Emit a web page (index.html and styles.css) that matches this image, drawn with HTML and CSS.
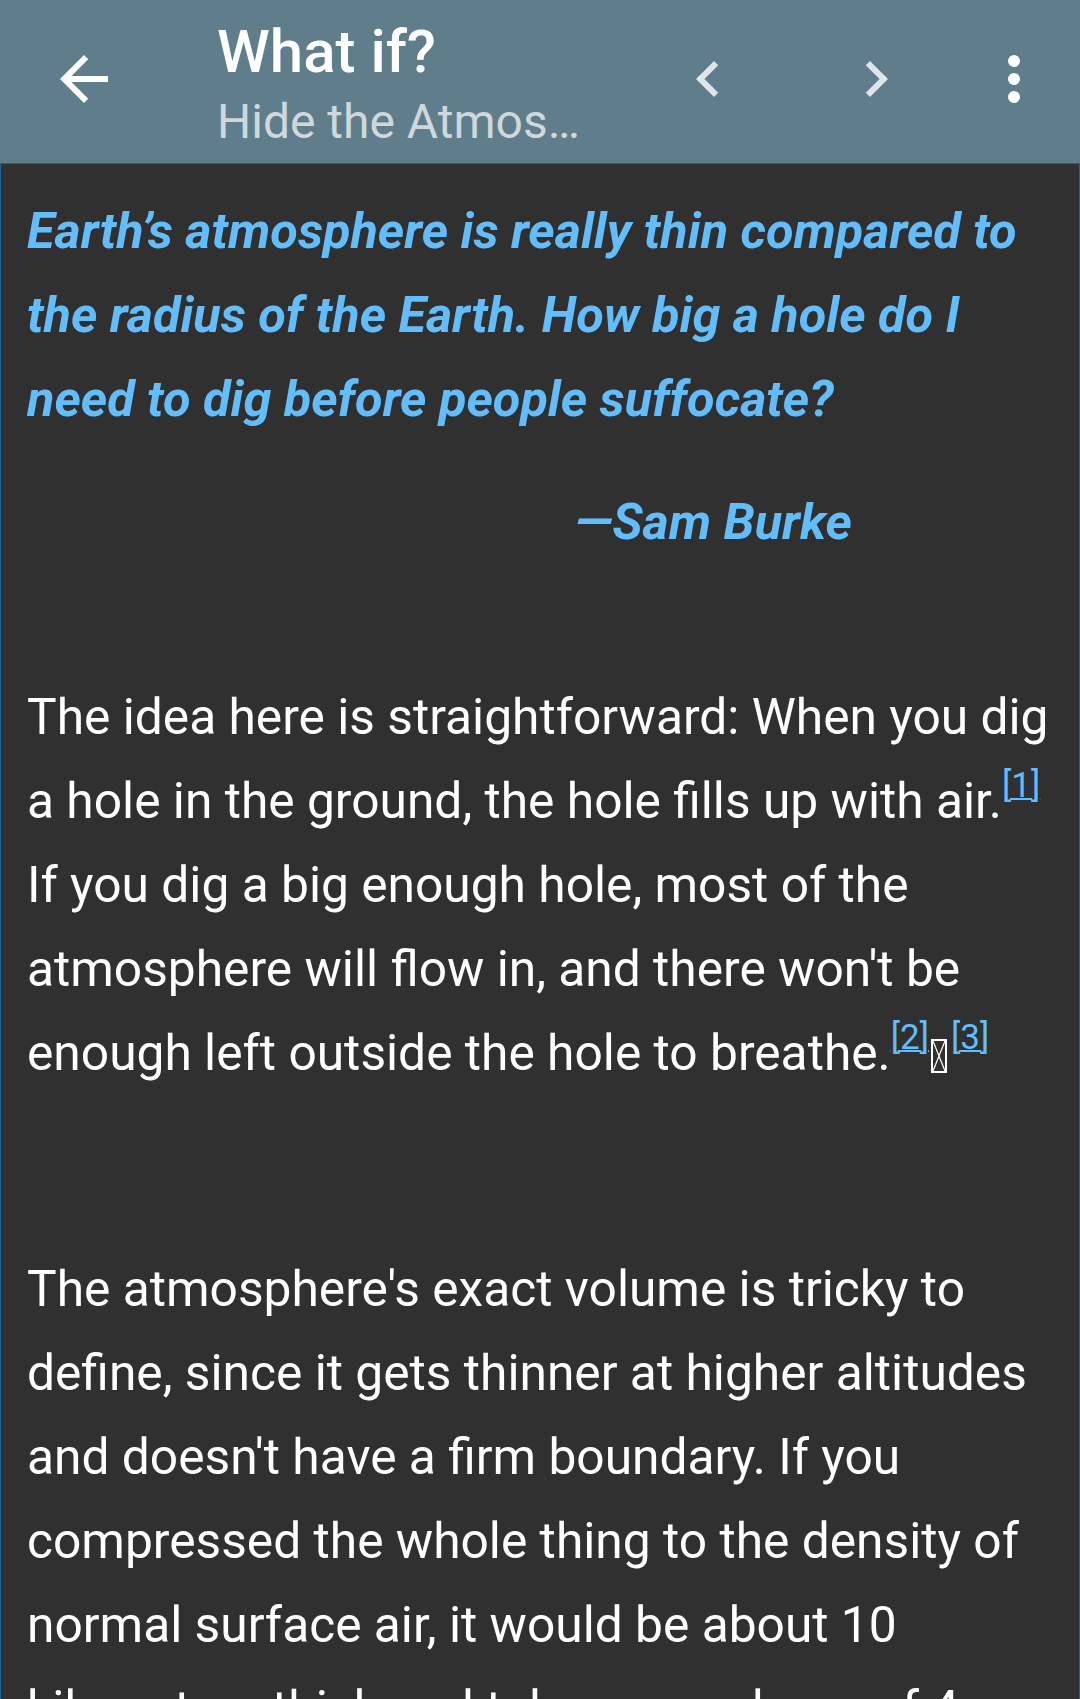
FILE: index.html
```html
<!DOCTYPE html>
<html lang="en">
<head>
<meta charset="utf-8">
<title>What if? - Hide the Atmosphere</title>
<link rel="stylesheet" href="styles.css">
</head>
<body>
<header class="toolbar">
  <button class="icon-btn back" aria-label="Back">
    <svg viewBox="0 0 24 24" width="72" height="72"><path fill="#fff" d="M20 11H7.83l5.59-5.59L12 4l-8 8 8 8 1.41-1.41L7.83 13H20v-2z"/></svg>
  </button>
  <div class="titles">
    <div class="title">What if?</div>
    <div class="subtitle">Hide the Atmos…</div>
  </div>
  <button class="icon-btn prev" aria-label="Previous">
    <svg viewBox="0 0 24 24" width="72" height="72"><path fill="#dfe5e8" d="M15.41 7.41L14 6l-6 6 6 6 1.41-1.41L10.83 12z"/></svg>
  </button>
  <button class="icon-btn next" aria-label="Next">
    <svg viewBox="0 0 24 24" width="72" height="72"><path fill="#dfe5e8" d="M10 6L8.59 7.41 13.17 12l-4.58 4.59L10 18l6-6z"/></svg>
  </button>
  <button class="icon-btn more" aria-label="More options">
    <svg viewBox="0 0 24 24" width="72" height="72"><circle fill="#fff" cx="12" cy="6" r="2"/><circle fill="#fff" cx="12" cy="12" r="2"/><circle fill="#fff" cx="12" cy="18" r="2"/></svg>
  </button>
</header>
<main class="article">
  <blockquote class="question">
    <p class="question-text">Earth’s atmosphere is really thin compared to the radius of the Earth. How big a hole do I need to dig before people suffocate?</p>
    <p class="attribution">—Sam Burke</p>
  </blockquote>
  <p class="para first">The idea here is straightforward: When you dig a hole in the ground, the hole fills up with air.<sup class="ref"><a href="#ref1">[1]</a></sup> If you dig a big enough hole, most of the atmosphere will flow in, and there won't be enough left outside the hole to breathe.<sup class="ref"><a href="#ref2">[2]</a></sup><span class="tofu"><svg viewBox="0 0 16 34" width="16" height="34"><rect x="1" y="1" width="14" height="32" fill="none" stroke="#fff" stroke-width="2"/><path d="M2 2L14 32M14 2L2 32" stroke="#fff" stroke-width="1.2" fill="none"/></svg></span><sup class="ref"><a href="#ref3">[3]</a></sup></p>
  <p class="para second">The atmosphere's exact volume is tricky to define, since it gets thinner at higher altitudes and doesn't have a firm boundary. If you compressed the whole thing to the density of normal surface air, it would be about 10 kilometers thick and take up a volume of 4 billion cubic kilometers.</p>
</main>
</body>
</html>
```

FILE: styles.css
```css
* { box-sizing: border-box; }
html, body {
  margin: 0;
  padding: 0;
  background: #303030;
  font-family: Roboto, "Noto Sans", sans-serif;
}
body { overflow: hidden; height: 1699px; }

.toolbar {
  display: flex;
  align-items: flex-start;
  height: 163px;
  background: #607d8b;
  padding: 0 30px 0 48px;
}
.icon-btn {
  flex: none;
  width: 72px;
  height: 72px;
  margin-top: 43px;
  padding: 0;
  border: 0;
  background: none;
  display: block;
}
.icon-btn svg { display: block; }
.titles {
  flex: 1;
  min-width: 0;
  padding-left: 97px;
  padding-top: 16px;
  color: #fff;
}
.title {
  font-size: 60px;
  font-weight: 500;
  line-height: 72px;
}
.subtitle {
  font-size: 48px;
  font-weight: 400;
  line-height: 56px;
  margin-top: 6px;
  color: #cfd8dc;
  white-space: nowrap;
}
.prev { margin-right: 96px; }
.next { margin-right: 66px; }

.article {
  border: 1px solid #22609a;
  border-bottom: 0;
  min-height: 1536px;
  padding: 25px 18px 0 26px;
  color: #fff;
  font-size: 49.7px;
  line-height: 84px;
}
.question {
  margin: 0;
  color: #64bdfb;
  font-style: italic;
  font-weight: 700;
  font-size: 50.4px;
}
.question-text { margin: 0; }
.attribution {
  margin: 39px 0 0 548px;
}
.para { margin: 0; }
.para.first { margin-top: 111px; }
.para.second { margin-top: 152px; }

.ref {
  font-size: 35px;
  line-height: 1;
  vertical-align: 21px;
}
.ref a {
  color: #64bdfb;
  text-decoration: underline;
  text-decoration-thickness: 2px;
}
.tofu {
  display: inline-block;
  width: 16px;
  height: 34px;
  margin: 0 4px 0 2px;
  vertical-align: -3px;
}
.tofu svg { display: block; }
```
